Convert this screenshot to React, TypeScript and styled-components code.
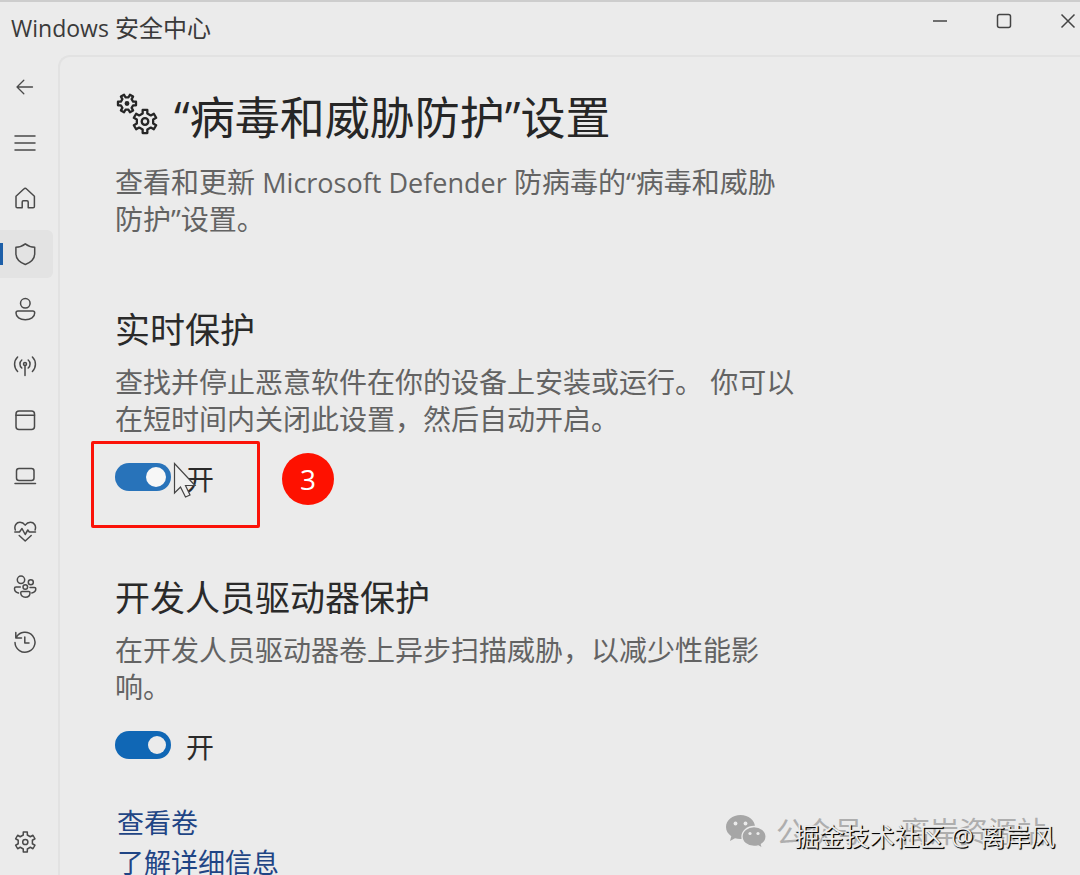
import React from "react";
import styled, { createGlobalStyle } from "styled-components";

const GlobalStyle = createGlobalStyle`
  *, *::before, *::after { box-sizing: border-box; }
  body {
    margin: 0;
    background: #ebebeb;
    color: #2a2a2a;
    font-family: "Open Sans", "Noto Sans CJK SC", sans-serif;
  }
  h1, h2, p { margin: 0; font-weight: 400; }
  button { border: 0; padding: 0; background: none; color: inherit; font: inherit; }
`;

const Window = styled.div`
  position: relative;
  display: flex;
  flex-direction: column;
  height: 100vh;
  overflow: hidden;
  border-top: 2px solid #cdcdcd;
`;

const TitleBar = styled.header`
  display: flex;
  justify-content: space-between;
  flex: none;
  height: 53px;
  padding-left: 11px;
`;

const AppName = styled.span`
  font-size: 24px;
  line-height: 52px;
  color: #3a3a3a;
`;

const Latin = styled.span<{ $size: number }>`
  font-size: ${(p) => p.$size}px;
  line-height: 1;
`;

const WindowControls = styled.div`
  display: flex;
`;

const WindowButton = styled.button`
  display: flex;
  align-items: center;
  justify-content: center;
  width: 64px;
  height: 38px;
  color: #444;

  &:last-child {
    width: 24px;
    margin-left: 20px;
  }
`;

const Body = styled.div`
  display: flex;
  flex: 1;
  min-height: 0;
`;

const Sidebar = styled.nav`
  display: flex;
  flex-direction: column;
  justify-content: space-between;
  flex: none;
  width: 58px;
  padding: 8px 5px 9px 0;
`;

const NavList = styled.div`
  display: flex;
  flex-direction: column;
  justify-content: space-between;
  height: 603px;
`;

const NavButton = styled.button<{ $active?: boolean }>`
  display: flex;
  align-items: center;
  flex: none;
  height: 48px;
  padding-left: 13px;
  color: #4a4a4a;
  border-radius: 0 6px 6px 0;
  ${(p) =>
    p.$active &&
    `
    background:
      linear-gradient(#1d5fa8, #1d5fa8) left center / 3px 22px no-repeat,
      #e3e3e3;
  `}
`;

const Panel = styled.main`
  flex: 1;
  min-width: 0;
  padding: 31px 24px 0 55px;
  border-top: 2px solid #e2e2e2;
  border-left: 2px solid #e2e2e2;
  border-top-left-radius: 12px;
  overflow: hidden;
`;

const PageHeading = styled.div`
  display: flex;
  gap: 15px;
  color: #262626;

  h1 {
    font-size: 45px;
    line-height: 60px;
  }
  svg { margin-top: 4px; }
`;

const Text = styled.p`
  max-width: 684px;
  font-size: 28px;
  line-height: 37px;
  color: #636363;
`;

const Intro = styled(Text)`
  margin-top: 16px;
`;

const Sections = styled.div`
  display: flex;
  flex-direction: column;
  gap: 77px;
  margin-top: 68px;
`;

const Section = styled.section`
  h2 {
    font-size: 35px;
    line-height: 48px;
    color: #2a2a2a;
  }
  p { margin-top: 10px; }
`;

const ToggleRow = styled.div`
  position: relative;
  display: flex;
  align-items: center;
  height: 40px;
  margin-top: 19px;
`;

const ToggleLabel = styled.label`
  display: flex;
  align-items: center;
  gap: 15px;
  font-size: 28px;
  line-height: 40px;
  color: #2a2a2a;

  span { padding-top: 3px; }
`;

const Switch = styled.input<{ $hover?: boolean }>`
  appearance: none;
  display: flex;
  align-items: center;
  justify-content: flex-end;
  width: 56px;
  height: 28px;
  margin: 0;
  padding-right: 5px;
  border-radius: 14px;
  background: ${(p) => (p.$hover ? "#2873ba" : "#1067b5")};

  &::before {
    content: "";
    width: ${(p) => (p.$hover ? 20 : 18)}px;
    height: ${(p) => (p.$hover ? 20 : 18)}px;
    border-radius: 50%;
    background: ${(p) => (p.$hover ? "#f7f7f7" : "#ebebeb")};
  }
`;

const Highlight = styled.div`
  position: absolute;
  top: -16px;
  left: -24px;
  width: 169px;
  height: 87px;
  border: 3px solid #fb1208;
  border-radius: 2px;
`;

const StepBadge = styled.span`
  position: absolute;
  top: -4px;
  left: 167px;
  width: 52px;
  height: 52px;
  border-radius: 50%;
  background: #fe1100;
  color: #fff;
  font-size: 28px;
  line-height: 52px;
  text-align: center;
`;

const Pointer = styled.svg`
  position: absolute;
  top: 5px;
  left: 58px;
`;

const Links = styled.div`
  display: flex;
  flex-direction: column;
  align-items: flex-start;
  margin-top: 38px;
  padding-left: 2px;
`;

const TextLink = styled.a`
  font-size: 27px;
  line-height: 40px;
  color: #1f4585;
  text-decoration: none;
`;

const Watermark = styled.div`
  position: absolute;
  right: 34px;
  bottom: 21px;
  display: flex;
  align-items: center;
  font-size: 29px;
  line-height: 44px;
  color: #aeaeae;

  svg { margin-right: 9px; }
`;

const Dot = styled.span`
  width: 38px;
  text-align: center;
`;

const Credit = styled.div`
  position: absolute;
  right: 25px;
  bottom: 19px;
  font-size: 25px;
  line-height: 40px;
  color: #ebebeb;
  text-shadow: 1px 1px 1px #000, 1px 1px 0 #222;
  white-space: pre;
`;

/* Outline of a cog: flat-topped teeth joined by shallow valleys. */
function cogPath(cx: number, cy: number, outer: number, inner: number, teeth: number, turn = 0) {
  const step = (Math.PI * 2) / teeth;
  const points: string[] = [];
  for (let i = 0; i < teeth; i++) {
    const mid = turn + i * step - Math.PI / 2;
    const corners: [number, number][] = [
      [inner, -0.27],
      [outer, -0.19],
      [outer, 0.19],
      [inner, 0.27],
    ];
    corners.forEach(([r, k]) => {
      const a = mid + k * step;
      points.push(`${(cx + r * Math.cos(a)).toFixed(2)} ${(cy + r * Math.sin(a)).toFixed(2)}`);
    });
  }
  return `M${points.join("L")}Z`;
}

const Icon = ({ children }: { children: React.ReactNode }) => (
  <svg
    width="24"
    height="24"
    viewBox="0 0 24 24"
    fill="none"
    stroke="currentColor"
    strokeWidth="1.5"
    strokeLinecap="round"
    strokeLinejoin="round"
    aria-hidden="true"
  >
    {children}
  </svg>
);

const navItems: { label: string; active?: boolean; icon: React.ReactNode }[] = [
  { label: "返回", icon: <path d="M19.5 12H4M10.8 5.2L4 12l6.8 6.8" strokeWidth="1.3" /> },
  { label: "菜单", icon: <path d="M2 5h20M2 12h20M2 19h20" /> },
  {
    label: "主页",
    icon: <path d="M3 10.2 10.8 3a2 2 0 0 1 2.8 0L21.4 10.2V20.5a1.3 1.3 0 0 1-1.3 1.3H15.2V16a1.2 1.2 0 0 0-1.2-1.2H10.4A1.2 1.2 0 0 0 9.2 16V21.8H4.3A1.3 1.3 0 0 1 3 20.5Z" />,
  },
  {
    label: "病毒和威胁防护",
    active: true,
    icon: <path d="M12.3 1.8C15 4 18 5 21.7 5.2V11.5c0 5-3.3 8.7-9.4 11-6.1-2.3-9.4-6-9.4-11V5.2C6.6 5 9.6 4 12.3 1.8Z" />,
  },
  {
    label: "帐户保护",
    icon: (
      <>
        <circle cx="12.3" cy="6.3" r="4.8" />
        <path d="M5 14H19.7a2 2 0 0 1 2 2c0 4-4 6.7-9.4 6.7S3 20 3 16a2 2 0 0 1 2-2Z" />
      </>
    ),
  },
  {
    label: "防火墙和网络保护",
    icon: (
      <>
        <circle cx="12" cy="11" r="1.5" />
        <path d="M12 12.5V22.5M8.8 15a5.2 5.2 0 0 1 0-8M15.2 15a5.2 5.2 0 0 0 0-8M4.6 18.5a10.2 10.2 0 0 1 0-14.5M19.4 18.5a10.2 10.2 0 0 0 0-14.5" />
      </>
    ),
  },
  {
    label: "应用和浏览器控制",
    icon: (
      <>
        <rect x="3" y="3" width="18.5" height="18.5" rx="3" />
        <path d="M3 7.3H21.5" />
      </>
    ),
  },
  {
    label: "设备安全性",
    icon: (
      <>
        <rect x="3.5" y="4.5" width="17.5" height="12" rx="2.5" />
        <path d="M2 19.5H22.5" />
      </>
    ),
  },
  {
    label: "设备性能和运行状况",
    icon: (
      <>
        <path d="M2.3 11C.8 6.5 3.5 3.3 7 3.3c2.3 0 4 1.2 5.2 2.8 1.2-1.6 2.9-2.8 5.2-2.8 3.5 0 6.2 3.2 4.7 7.7" />
        <path d="M1.8 13H6.5L9 9.5 12.2 15.5 14.8 11 16.3 13H22.5M6.2 16.5l6 5.5 6-5.5" />
      </>
    ),
  },
  {
    label: "家庭选项",
    icon: (
      <>
        <circle cx="8" cy="4.8" r="3.7" />
        <circle cx="17.8" cy="7.3" r="2.5" />
        <circle cx="12.3" cy="12" r="2.3" />
        <path d="M7.3 12H3a1.5 1.5 0 0 0-1.5 1.5c0 2.3 1.5 4 4 4.5M17 12.5h4.5a1.3 1.3 0 0 1 1.3 1.3c0 2-1.5 3.8-4 4.2M9 16.5h6.8a1.2 1.2 0 0 1 1.2 1.2c0 2.7-2 4.5-4.7 4.5s-4.6-1.8-4.6-4.5A1.3 1.3 0 0 1 9 16.5Z" />
      </>
    ),
  },
  {
    label: "保护历史记录",
    icon: <path d="M2.8 2.5V8H8.5M3.3 7.3A10 10 0 1 1 2 12.5M11.8 7V13H16" />,
  },
];

const SettingsIcon = () => (
  <Icon>
    <path d={cogPath(12.3, 12, 10.2, 7.3, 6)} />
    <circle cx="12.3" cy="12" r="2.6" />
  </Icon>
);

const CogsIcon = () => (
  <svg width="44" height="44" viewBox="0 0 44 44" fill="none" stroke="currentColor" strokeWidth="2.3" strokeLinejoin="round" aria-hidden="true">
    <path d={cogPath(12, 11.5, 9.2, 6.4, 6, Math.PI / 6)} />
    <circle cx="12" cy="11.5" r="1.3" fill="currentColor" />
    <path d={cogPath(30, 29.5, 11.8, 8.4, 6)} />
    <circle cx="30" cy="29.5" r="3.3" />
  </svg>
);

const WeChatIcon = () => (
  <svg width="41" height="34" viewBox="0 0 41 34" aria-hidden="true">
    <path fill="#a6a6a6" d="M14.5 0C6.5 0 0 5.3 0 12c0 3.8 2 7 5.3 9.2L4 26l5-2.7c1.7.5 3.5.8 5.5.8C22.5 24 29 18.7 29 12S22.5 0 14.5 0Z" />
    <path fill="#a6a6a6" stroke="#ebebeb" strokeWidth="1.3" d="M28 11.5c-6.7 0-12 4.5-12 10s5.3 10 12 10c1.5 0 3-.2 4.3-.6l4.2 2.3-1.1-3.9c2.9-1.8 4.7-4.6 4.7-7.8 0-5.5-5.4-10-12.1-10Z" />
    <g fill="#ebebeb">
      <circle cx="9.5" cy="8.5" r="1.9" />
      <circle cx="19.5" cy="8.5" r="1.9" />
      <circle cx="24" cy="18.5" r="1.6" />
      <circle cx="32" cy="18.5" r="1.6" />
    </g>
  </svg>
);

export default function App() {
  return (
    <Window lang="zh-CN">
      <GlobalStyle />
      <TitleBar>
        <AppName>
          <Latin $size={23}>Windows</Latin> 安全中心
        </AppName>
        <WindowControls>
          <WindowButton aria-label="最小化">
            <svg width="16" height="16" fill="none" stroke="currentColor" strokeWidth="1.5"><path d="M1 8h14" /></svg>
          </WindowButton>
          <WindowButton aria-label="最大化">
            <svg width="16" height="16" fill="none" stroke="currentColor" strokeWidth="1.5"><rect x="1.5" y="1.5" width="13" height="13" rx="2" /></svg>
          </WindowButton>
          <WindowButton aria-label="关闭">
            <svg width="16" height="16" fill="none" stroke="currentColor" strokeWidth="1.5"><path d="M1.5 1.5l13 13M14.5 1.5l-13 13" /></svg>
          </WindowButton>
        </WindowControls>
      </TitleBar>
      <Body>
        <Sidebar>
          <NavList>
            {navItems.map((item) => (
              <NavButton key={item.label} aria-label={item.label} $active={item.active}>
                <Icon>{item.icon}</Icon>
              </NavButton>
            ))}
          </NavList>
          <NavButton aria-label="设置">
            <SettingsIcon />
          </NavButton>
        </Sidebar>
        <Panel>
          <PageHeading>
            <CogsIcon />
            <h1>“病毒和威胁防护”设置</h1>
          </PageHeading>
          <Intro>
            查看和更新 <Latin $size={27}>Microsoft Defender</Latin> 防病毒的“病毒和威胁防护”设置。
          </Intro>
          <Sections>
            <Section>
              <h2>实时保护</h2>
              <Text>查找并停止恶意软件在你的设备上安装或运行。 你可以在短时间内关闭此设置，然后自动开启。</Text>
              <ToggleRow>
                <ToggleLabel>
                  <Switch type="checkbox" role="switch" defaultChecked $hover />
                  <span>开</span>
                </ToggleLabel>
                <Pointer width="24" height="38" viewBox="0 0 24 38" aria-hidden="true">
                  <path d="M1.5 1.5V31l6-6 5 10 4.5-2-4.5-9.5H22Z" fill="#f0f0f0" stroke="#444" strokeWidth="1.2" />
                </Pointer>
                <Highlight />
                <StepBadge>3</StepBadge>
              </ToggleRow>
            </Section>
            <Section>
              <h2>开发人员驱动器保护</h2>
              <Text>在开发人员驱动器卷上异步扫描威胁，以减少性能影响。</Text>
              <ToggleRow>
                <ToggleLabel>
                  <Switch type="checkbox" role="switch" defaultChecked />
                  <span>开</span>
                </ToggleLabel>
              </ToggleRow>
            </Section>
          </Sections>
          <Links>
            <TextLink href="#volumes">查看卷</TextLink>
            <TextLink href="#learn-more">了解详细信息</TextLink>
          </Links>
        </Panel>
      </Body>
      <Watermark>
        <WeChatIcon />
        <span>公众号</span>
        <Dot>·</Dot>
        <span>离岸资源站</span>
      </Watermark>
      <Credit>掘金技术社区 @ 离岸风</Credit>
    </Window>
  );
}
